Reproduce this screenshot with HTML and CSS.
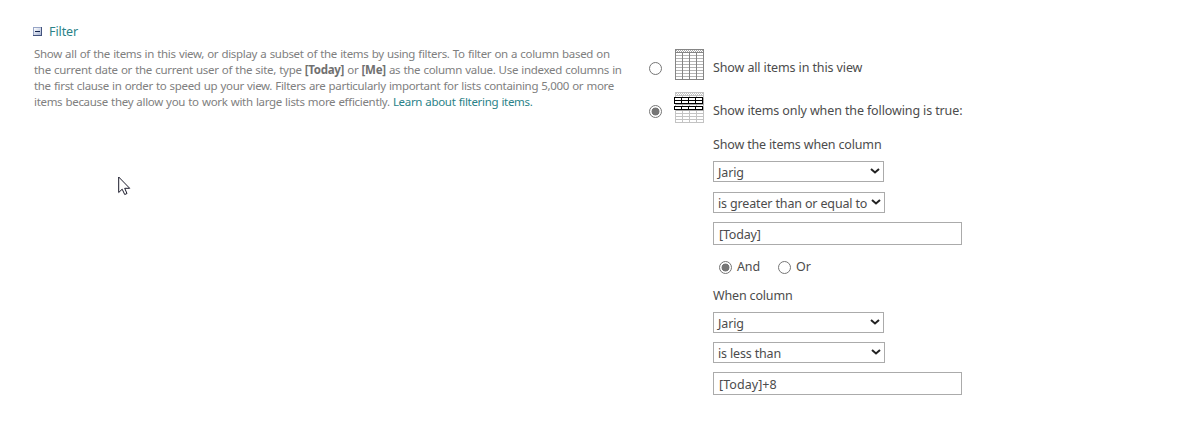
FILE: index.html
```html
<!DOCTYPE html>
<html lang="en">
<head>
<meta charset="utf-8">
<title>Filter</title>
<link rel="stylesheet" href="styles.css">
</head>
<body>
<main class="filter">
  <section class="intro">
    <h3 class="heading">
      <svg class="collapse" width="9" height="9" viewBox="0 0 9 9" shape-rendering="crispEdges"><defs><linearGradient id="g" x1="0" y1="0" x2="1" y2="1"><stop offset="0" stop-color="#fff"/><stop offset="1" stop-color="#a9b6d4"/></linearGradient></defs><path fill="#97a5c6" d="M0 0h9v9H0z"/><path fill="url(#g)" d="M1 1h7v7H1z"/><path fill="#43537d" d="M8 0h1v9H0V8h8z"/><path fill="#14254f" d="M2 4h5v1H2z"/></svg>
      <a class="title">Filter</a>
    </h3>
    <p class="description">
      <span class="line l1">Show all of the items in this view, or display a subset of the items by using filters. To filter on a column based on</span>
      <span class="line l2">the current date or the current user of the site, type <b>[Today]</b> or <b>[Me]</b> as the column value. Use indexed columns in</span>
      <span class="line l3">the first clause in order to speed up your view. Filters are particularly important for lists containing 5,000 or more</span>
      <span class="line l4">items because they allow you to work with large lists more efficiently. <a class="link">Learn about filtering items.</a></span>
    </p>
  </section>
  <form class="options">
    <label class="option option-all">
      <input class="radio" type="radio" name="show">
      <svg class="grid" width="31" height="31" viewBox="0 0 31 31" shape-rendering="crispEdges">
        <path fill="#fff" d="M1 0h29v31H1z"/>
        <path stroke="#aaa" stroke-dasharray="1 1" d="M2 1.500h27M3 2.500h26"/>
        <path stroke="#b5b5b5" d="M2 6.500h27M2 9.500h27M2 12.500h27M2 15.500h27M2 18.500h27M2 21.500h27M2 24.500h27M2 27.500h27"/>
        <path stroke="#858585" fill="none" d="M1.500.5h28v30h-28zM2 3.500h27M8.500 3v28M15.500 3v28M22.500 3v28"/>
      </svg>
      <span class="text t-all">Show all items in this view</span>
    </label>
    <label class="option option-some">
      <input class="radio" type="radio" name="show" checked>
      <svg class="grid" width="31" height="31" viewBox="0 0 31 31" shape-rendering="crispEdges">
        <path stroke="#c3c3c3" fill="none" d="M1.500 0v30.500h28V0M1 .5h29M1 3.500h29M1 12.500h29M1 18.500h29M1 21.500h29M1 24.500h29M1 27.500h29M8.500 3v28M15.500 3v28M22.500 3v28"/>
        <path stroke="#c3c3c3" stroke-dasharray="1 1" d="M2 1.500h27M3 2.500h27"/>
        <path fill="#aaa" d="M2 6h28v7H2zM2 15h28v4H2z"/>
        <path fill="#000" d="M0 5h29v7H0zM0 14h29v4H0z"/>
        <path fill="#fff" d="M1 6h6v2H1zM8 6h6v2H8zM15 6h6v2h-6zM22 6h6v2h-6zM1 9h6v2H1zM8 9h6v2H8zM15 9h6v2h-6zM22 9h6v2h-6zM1 15h6v2H1zM8 15h6v2H8zM15 15h6v2h-6zM22 15h6v2h-6z"/>
      </svg>
      <span class="text t-some">Show items only when the following is true:</span>
    </label>
    <div class="clauses">
      <div class="label"><span class="text t-when1">Show the items when column</span></div>
      <div class="select"><span class="text">Jarig</span><svg class="arrow" width="10" height="6" viewBox="0 0 10 6"><path d="M1 1l4 3.500L9 1"/></svg></div>
      <div class="select wide gap10"><span class="text t-greater">is greater than or equal to</span><svg class="arrow" width="10" height="6" viewBox="0 0 10 6"><path d="M1 1l4 3.500L9 1"/></svg></div>
      <div class="field"><span class="text t-today">[Today]</span></div>
      <div class="joins">
        <input class="radio" type="radio" name="join" checked><span class="text and">And</span>
        <input class="radio" type="radio" name="join"><span class="text or">Or</span>
      </div>
      <div class="label second"><span class="text t-when2">When column</span></div>
      <div class="select"><span class="text">Jarig</span><svg class="arrow" width="10" height="6" viewBox="0 0 10 6"><path d="M1 1l4 3.500L9 1"/></svg></div>
      <div class="select wide"><span class="text t-less">is less than</span><svg class="arrow" width="10" height="6" viewBox="0 0 10 6"><path d="M1 1l4 3.500L9 1"/></svg></div>
      <div class="field"><span class="text t-today8">[Today]+8</span></div>
    </div>
  </form>
</main>
<svg class="cursor" width="13" height="20" viewBox="0 0 13 20"><path fill="#fff" stroke="#1b1b2b" d="M.7 1v15.500l3.500-3.300 2.500 5.300 2.300-1-2.300-5.200h5z"/></svg>
</body>
</html>
```
FILE: styles.css
```css
body {
  margin: 0;
  background: #fff;
  color: #4c4c4c;
  font-family: "Noto Sans", "Open Sans", sans-serif;
  font-size: 12.5px;
}
.filter { display: flex; height: 435px; }
.intro { width: 616px; padding: 22px 0 0 33px; }
.heading {
  display: flex;
  align-items: center;
  gap: 7px;
  margin: 0;
  height: 19px;
  font-size: 12.5px;
  font-weight: 400;
}
.title { color: #2a8288; letter-spacing: -0.1px; }
.description {
  margin: 5px 0 0 1px;
  color: #808080;
  font-size: 11.5px;
  line-height: 16px;
}
.line { display: block; width: max-content; white-space: nowrap; word-spacing: 0.5px; }
.l1 { letter-spacing: -0.315px; }
.l2 { letter-spacing: -0.3px; }
.l3 { letter-spacing: -0.325px; }
.l4 { letter-spacing: -0.315px; }
.description b { color: #707070; }
.link { color: #2a8288; }
.text { white-space: nowrap; letter-spacing: -0.12px; }
.t-when1, .t-when2, .t-less { letter-spacing: -0.165px; }
.t-greater, .t-today { letter-spacing: -0.19px; }
.t-greater { letter-spacing: -0.15px; }
.t-today8 { letter-spacing: 0.05px; }
.options { padding-top: 49px; }
.option { display: flex; align-items: center; height: 31px; }
.option-some { margin-top: 12px; }
.radio {
  appearance: none;
  box-sizing: border-box;
  flex: none;
  width: 13px;
  height: 13px;
  margin: 0;
  border: 1px solid #767676;
  border-radius: 50%;
}
.radio:checked { background: radial-gradient(circle, #767676 3.6px, #fff 4.3px); }
.option .radio { margin-top: 8px; }
.grid { margin: 0 8px 0 12px; }
.option .text { margin-top: 6px; }
.clauses { display: flex; flex-direction: column; padding: 12px 0 0 64px; }
.label { height: 26px; line-height: 19px; }
.select, .field { box-sizing: border-box; border: 1px solid #ababab; display: flex; align-items: center; }
.select { width: 171px; height: 21px; padding: 1px 3px 0 4px; justify-content: space-between; }
.wide { width: 172px; margin-top: 9px; }
.gap10 { margin-top: 10px; }
.arrow { flex: none; margin-bottom: 2px; fill: none; stroke: #222; stroke-width: 2; }
.field { width: 249px; height: 23px; margin-top: 9px; padding: 1px 0 0 5px; }
.joins { display: flex; align-items: center; height: 13px; margin-top: 16px; padding-left: 6px; }
.joins .text { margin-top: -2px; }
.and { width: 23px; margin: 0 18px 0 5px; }
.or { margin-left: 5px; }
.second { margin-top: 12px; }
.cursor { position: absolute; left: 118px; top: 176px; }
```
